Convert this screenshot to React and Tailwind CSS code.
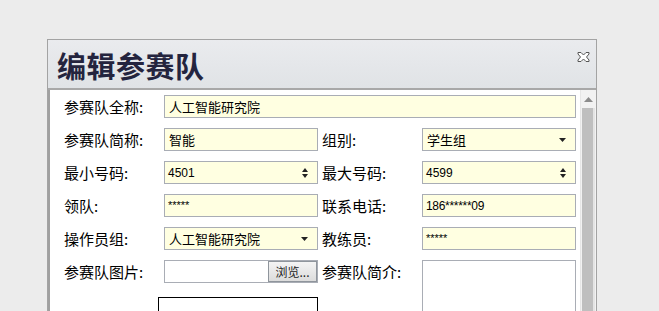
import React from "react";

const font = { fontFamily: '"Noto Sans CJK SC", "Liberation Sans", sans-serif' };

function Label({ children, className = "" }) {
  return (
    <div className={`h-[23px] flex items-center text-[15px] leading-none text-black ${className}`}>
      {children}
    </div>
  );
}

function Field({ children, white, className = "" }) {
  return (
    <div
      className={`h-[23px] flex items-center border border-[#a9adb5] ${white ? "bg-white" : "bg-[#ffffe1]"} ${className}`}
    >
      {children}
    </div>
  );
}

function Spin() {
  return (
    <div className="ml-auto mr-[9px] flex flex-col items-center gap-[2px]">
      <svg width="6" height="4" viewBox="0 0 6 4"><path d="M3 0L6 4H0z" fill="#222" /></svg>
      <svg width="6" height="4" viewBox="0 0 6 4"><path d="M0 0h6L3 4z" fill="#222" /></svg>
    </div>
  );
}

function Drop() {
  return (
    <svg className="ml-auto mr-[9px]" width="7" height="4" viewBox="0 0 7 4">
      <path d="M0 0h7L3.5 4z" fill="#222" />
    </svg>
  );
}

export default function App() {
  return (
    <div className="h-[311px] w-[659px] overflow-hidden bg-[#ececec] pt-[39px] pl-[47px]" style={font}>
      <div className="w-[550px] h-[300px] border border-[#a3a3a3] flex flex-col bg-white">
        {/* header */}
        <div className="h-[50px] shrink-0 flex items-center justify-between bg-gradient-to-b from-[#eaebee] to-[#e0e3e6] border-b-2 border-[#a8a8a8]">
          <span className="pl-[9px] pt-[2px] text-[29px] font-bold text-[#24243e] leading-none tracking-[0.5px]">编辑参赛队</span>
          <svg className="mr-[6px] mb-[14px]" width="13" height="12" viewBox="0 0 13 12">
            <path
              d="M1 1.5L4 1.5L6.5 4L9 1.5L12 1.5L12 3L9.5 6L12 9L12 10.5L9 10.5L6.5 8L4 10.5L1 10.5L1 9L3.5 6L1 3Z"
              fill="#fff"
              stroke="#555"
              strokeWidth="1"
            />
          </svg>
        </div>
        {/* body */}
        <div className="flex flex-1 min-h-0 border-l-2 border-[#a0a0a0]">
          <div className="flex-1 pl-[14px] pt-[5px]">
            <div className="grid grid-cols-[100px_154px_104px_154px] gap-y-[10px] text-[13px]">
              <Label>参赛队全称:</Label>
              <Field className="col-span-3">
                <span className="pl-[4px] pt-[1px]">人工智能研究院</span>
              </Field>

              <Label>参赛队简称:</Label>
              <Field>
                <span className="pl-[4px] pt-[1px]">智能</span>
              </Field>
              <Label className="pl-[4px]">组别:</Label>
              <Field>
                <span className="pl-[4px] pt-[1px]">学生组</span>
                <Drop />
              </Field>

              <Label>最小号码:</Label>
              <Field>
                <span className="pl-[3px] text-[12px]" style={{ fontFamily: '"Liberation Sans", sans-serif' }}>4501</span>
                <Spin />
              </Field>
              <Label className="pl-[4px]">最大号码:</Label>
              <Field>
                <span className="pl-[3px] text-[12px]" style={{ fontFamily: '"Liberation Sans", sans-serif' }}>4599</span>
                <Spin />
              </Field>

              <Label>领队:</Label>
              <Field>
                <span className="pl-[3px] text-[11px]" style={{ fontFamily: '"Liberation Sans", sans-serif' }}>*****</span>
              </Field>
              <Label className="pl-[4px]">联系电话:</Label>
              <Field>
                <span className="pl-[3px] text-[12px] tracking-[-0.3px]" style={{ fontFamily: '"Liberation Sans", sans-serif' }}>186******09</span>
              </Field>

              <Label>操作员组:</Label>
              <Field>
                <span className="pl-[4px] pt-[1px]">人工智能研究院</span>
                <Drop />
              </Field>
              <Label className="pl-[4px]">教练员:</Label>
              <Field>
                <span className="pl-[3px] text-[11px]" style={{ fontFamily: '"Liberation Sans", sans-serif' }}>*****</span>
              </Field>

              <Label>参赛队图片:</Label>
              <Field white className="justify-end">
                <div className="h-[21px] w-[49px] flex items-center justify-center border border-[#8f959c] bg-gradient-to-b from-[#f4f4f4] to-[#dcdcdc] text-[12px] text-[#222]">
                  浏览...
                </div>
              </Field>
              <Label className="pl-[4px]">参赛队简介:</Label>
              <div className="row-span-2 h-[60px] border border-[#a9adb5] bg-white" />

              <div />
              <div className="-ml-[6px] mt-[4px] w-[160px] h-[30px] border border-black" />
              <div />
            </div>
          </div>
          {/* scrollbar */}
          <div className="w-[16px] shrink-0 flex flex-col border-l border-[#e6e6e6] bg-[#f2f2f2]">
            <div className="h-[18px] flex items-center justify-center">
              <svg width="9" height="5" viewBox="0 0 9 5"><path d="M4.5 0L9 5H0z" fill="#8c8c8c" /></svg>
            </div>
            <div className="flex-1 mx-[1px] bg-[#bfbfbf] border-r-[2px] border-[#e4e4e4]" />
          </div>
        </div>
      </div>
    </div>
  );
}
